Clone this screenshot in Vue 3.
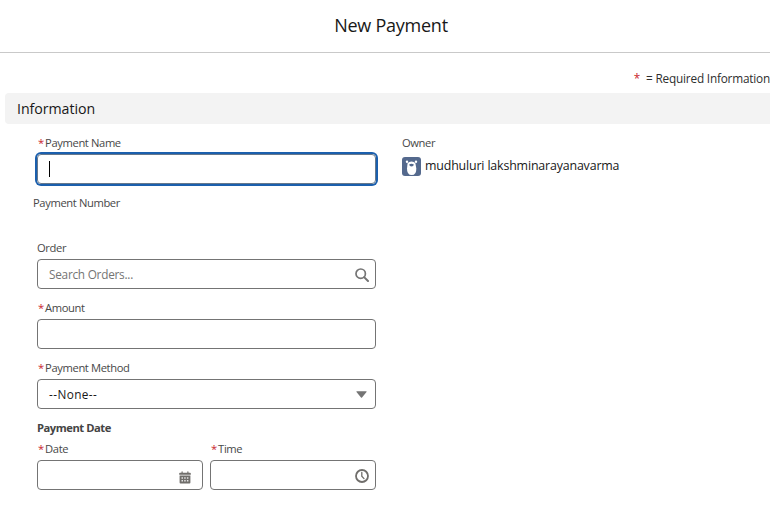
<script setup>
import { ref } from 'vue'

const paymentName = ref('')
const owner = 'mudhuluri lakshminarayanavarma'
</script>

<template>
  <main class="modal">
    <header class="modal-header"><h1>New Payment</h1></header>
    <p class="legend"><span class="star">*</span><span>= Required Information</span></p>
    <h2 class="section">Information</h2>
    <div class="columns">
      <form class="form" @submit.prevent>
        <div class="field">
          <div class="label required"><span class="star">*</span><span>Payment Name</span></div>
          <div class="box focused"><span class="caret"></span>{{ paymentName }}</div>
        </div>
        <div class="field number">
          <div class="label"><span>Payment Number</span></div>
        </div>
        <div class="field">
          <div class="label"><span>Order</span></div>
          <div class="box">
            <span class="placeholder">Search Orders...</span>
            <svg class="icon search" width="14" height="14" viewBox="0 0 14 14">
              <circle cx="5.7" cy="5.7" r="4.7" fill="none" stroke="#747474" stroke-width="1.7" />
              <path d="M9.1 9.1 13 13" stroke="#747474" stroke-width="2" stroke-linecap="round" />
            </svg>
          </div>
        </div>
        <div class="field">
          <div class="label required"><span class="star">*</span><span>Amount</span></div>
          <div class="box"></div>
        </div>
        <div class="field">
          <div class="label required"><span class="star">*</span><span>Payment Method</span></div>
          <div class="box">
            <span class="value">--None--</span>
            <svg class="icon arrow" width="11" height="7" viewBox="0 0 11 7">
              <path d="M.8.3h9.4q.7 0 .3.6L6 6.4q-.5.5-1 0L.5.9Q.1.3.8.3Z" fill="#747474" />
            </svg>
          </div>
        </div>
        <div class="group-title"><span>Payment Date</span></div>
        <div class="pair">
          <div class="field">
            <div class="label required"><span class="star">*</span><span>Date</span></div>
            <div class="box">
              <svg class="icon calendar" width="12" height="13" viewBox="0 0 12 13">
                <path d="M1 1.7h1.5V.9q0-.6.6-.6t.6.6v.8h4.6V.9q0-.6.6-.6t.6.6v.8H11q.8 0 .8.8v1.2H.2V2.5q0-.8.8-.8Z" fill="#706e6b" />
                <path d="M.6 4.5h10.8v7q0 .9-.9.9h-9q-.9 0-.9-.9Z" fill="#706e6b" />
                <path d="M2.5 6.2h1.5v1.5H2.5zM5.2 6.2h1.5v1.5H5.2zM7.9 6.2h1.5v1.5H7.9zM2.5 9h1.5v1.5H2.5zM5.2 9h1.5v1.5H5.2zM7.9 9h1.5v1.5H7.9z" fill="#e4e4e4" />
              </svg>
            </div>
          </div>
          <div class="field">
            <div class="label required"><span class="star">*</span><span>Time</span></div>
            <div class="box">
              <svg class="icon clock" width="14" height="14" viewBox="0 0 14 14">
                <circle cx="7" cy="7" r="6" fill="none" stroke="#706e6b" stroke-width="1.8" />
                <path d="M6.8 3.4v3.8L9 9.6" fill="none" stroke="#706e6b" stroke-width="1.3" stroke-linecap="round" />
              </svg>
            </div>
          </div>
        </div>
      </form>
      <section class="owner">
        <div class="label"><span>Owner</span></div>
        <div class="owner-row">
          <svg width="19" height="19" viewBox="0 0 19 19">
            <rect width="19" height="19" rx="3" fill="#54698d" />
            <circle cx="5" cy="4.8" r="1.2" fill="#fff" />
            <circle cx="14" cy="4.8" r="1.2" fill="#fff" />
            <path d="M5.6 6.2Q7 4.6 9.5 4.6t3.9 1.6l.9 5.3q.3 6.6-4.6 6.6T5 11.5Z" fill="#fff" />
            <path d="M7.1 7.5q2.4-1.3 4.8 0-.3 2.1-2.4 2.1T7.1 7.5Z" fill="#54698d" />
          </svg>
          <span class="owner-name">{{ owner }}</span>
        </div>
      </section>
    </div>
  </main>
</template>

<style>
body { background: #fff; overflow: hidden; }
</style>

<style scoped>
* { box-sizing: border-box; }
.modal {
  width: 770px;
  height: 524px;
  overflow: hidden;
  font-family: "Open Sans", "Noto Sans", sans-serif;
  color: #181818;
  white-space: nowrap;
}
.modal-header {
  height: 53px;
  border-bottom: 1px solid #c9c9c9;
  padding-left: 12px;
  text-align: center;
}
h1 { margin: 0; font-size: 18px; line-height: 51px; font-weight: 400; letter-spacing: -0.25px; }
.star { color: #c9252d; }
.legend {
  display: flex;
  justify-content: flex-end;
  gap: 6px;
  margin: 17px 0 0;
  font-size: 11.8px;
  line-height: 16px;
  letter-spacing: -0.2px;
  color: #2e2e2e;
}
.section {
  height: 31px;
  margin: 7px 0 0 5px;
  padding-left: 12px;
  border-radius: 4px 0 0 4px;
  background: #f3f3f3;
  font-size: 14.2px;
  line-height: 31px;
  font-weight: 400;
  letter-spacing: -0.05px;
}
.columns { display: flex; gap: 26px; padding: 11px 0 0 37px; }
.form { width: 339px; }
.field { margin-bottom: 11px; }
.label {
  display: flex;
  height: 16px;
  margin-bottom: 3px;
  font-size: 11.2px;
  line-height: 16px;
  letter-spacing: -0.38px;
  color: #484848;
}
.required { gap: 1.3px; padding-left: 1px; }
.box {
  display: flex;
  align-items: center;
  height: 30px;
  padding: 0 7px 0 11px;
  border: 1px solid #747474;
  border-radius: 4px;
  font-size: 11.8px;
  letter-spacing: -0.25px;
}
.focused { border-color: #66788c; box-shadow: 0 0 0 2px #1b5fad; }
.caret { width: 1px; height: 16px; background: #000; }
.placeholder { color: #747474; }
.value { letter-spacing: 0.4px; }
.icon { margin-left: auto; }
.search { margin: 2px -1px 0 auto; }
.arrow { margin-right: 1px; }
.calendar { margin: 4px 4px 0 auto; }
.clock { margin: 2px -1px 0 auto; }
.number { margin: 0 0 29px -4px; }
.number .label { margin: 0; }
.group-title {
  height: 16px;
  margin-bottom: 5px;
  font-size: 11.2px;
  line-height: 16px;
  font-weight: 700;
  letter-spacing: -0.46px;
  color: #444;
}
.pair { display: grid; grid-template-columns: 166px 166px; gap: 7px; }
.owner-row { display: flex; gap: 4px; align-items: center; font-size: 12.4px; line-height: 19px; letter-spacing: -0.16px; margin-top: 6px; }
.owner-name { margin-top: -2px; }
</style>
